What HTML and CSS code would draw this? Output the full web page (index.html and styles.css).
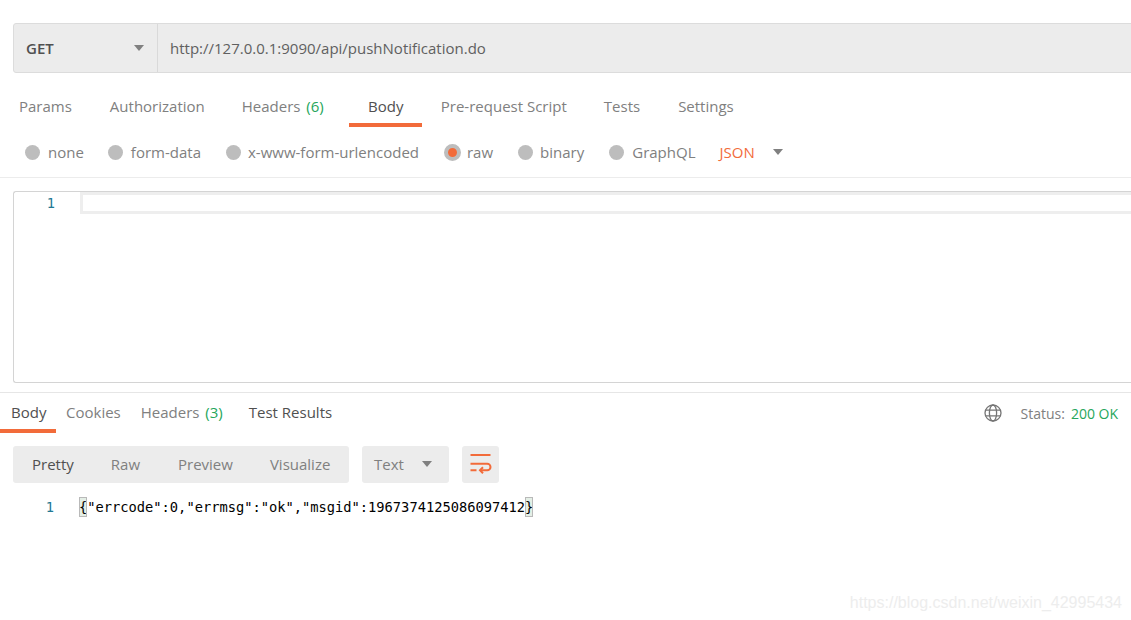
FILE: index.html
```html
<!DOCTYPE html>
<html lang="en">
<head>
<meta charset="utf-8">
<title>Postman</title>
<link rel="stylesheet" href="styles.css">
</head>
<body>
<div class="app">
  <div class="urlbar">
    <div class="method"><span class="method-name">GET</span><span class="caret"></span></div>
    <div class="url">http://127.0.0.1:9090/api/pushNotification.do</div>
  </div>
  <nav class="req-tabs">
    <span class="tab t-params">Params</span>
    <span class="tab t-auth">Authorization</span>
    <span class="tab t-headers">Headers <em class="count">(6)</em></span>
    <span class="tab t-body active">Body</span>
    <span class="tab t-pre">Pre-request Script</span>
    <span class="tab t-tests">Tests</span>
    <span class="tab t-settings">Settings</span>
  </nav>
  <div class="body-types">
    <span class="radio r-none"><i class="dot"></i>none</span>
    <span class="radio r-form"><i class="dot"></i>form-data</span>
    <span class="radio r-url"><i class="dot"></i>x-www-form-urlencoded</span>
    <span class="radio r-raw"><i class="dot on"></i>raw</span>
    <span class="radio r-bin"><i class="dot"></i>binary</span>
    <span class="radio r-gql"><i class="dot"></i>GraphQL</span>
    <span class="json">JSON</span><span class="caret"></span>
  </div>
  <div class="editor">
    <div class="gutter">1</div>
    <div class="code-area"><div class="active-line"></div></div>
  </div>
  <nav class="res-tabs">
    <span class="rtab active">Body</span>
    <span class="rtab r-cookies">Cookies</span>
    <span class="rtab r-headers">Headers <em class="count">(3)</em></span>
    <span class="rtab r-tests">Test Results</span>
    <span class="status">
      <svg class="globe" width="18" height="18" viewBox="0 0 18 18" fill="none" stroke="#757575" stroke-width="1.3"><circle cx="9" cy="9" r="8"/><ellipse cx="9" cy="9" rx="3.600" ry="8"/><path d="M1.600 6.200h14.800M1.600 11.800h14.800"/></svg>
      <span class="status-label">Status:</span><span class="status-val">200 OK</span>
    </span>
  </nav>
  <div class="toolbar">
    <div class="seg">
      <span class="seg-item s-pretty">Pretty</span>
      <span class="seg-item s-raw">Raw</span>
      <span class="seg-item s-preview">Preview</span>
      <span class="seg-item s-vis">Visualize</span>
    </div>
    <div class="format"><span>Text</span><span class="caret"></span></div>
    <div class="wrap">
      <svg class="wrap-icon" width="22" height="20" viewBox="0 0 22 20" fill="none" stroke="#f26b3a" stroke-width="2"><path d="M0.500 1h20M0.500 9.700h16.700a3.300 3.300 0 0 1 0 6.600H10.500M0.500 16.300h6"/><path d="M13 13.300l-3 3 3 3"/></svg>
    </div>
  </div>
  <div class="response">
    <div class="res-gutter">1</div>
    <div class="res-code"><span class="bracket">{</span>"errcode":0,"errmsg":"ok","msgid":1967374125086097412<span class="bracket">}</span></div>
  </div>
  <div class="watermark">https://blog.csdn.net/weixin_42995434</div>
</div>
</body>
</html>
```
FILE: styles.css
```css
* { box-sizing: border-box; }
html, body { margin: 0; height: 100%; }
body { background: #fff; overflow: hidden; font-family: "Open Sans", "Noto Sans", sans-serif; font-size: 15px; color: #808080; }
.app { position: relative; width: 1131px; height: 620px; overflow: hidden; padding-top: 23px; }
em { font-style: normal; }

.urlbar { display: flex; height: 50px; margin-left: 13px; width: 1140px; background: #ececec; border: 1px solid #dcdcdc; border-radius: 3px; }
.method { width: 144px; display: flex; align-items: center; justify-content: space-between; padding: 0 13px 0 12px; border-right: 1px solid #d9d9d9; }
.method-name { font-weight: 600; color: #505050; }
.url { padding-left: 12px; line-height: 48px; color: #606060; }
.caret { display: inline-block; width: 0; height: 0; border-left: 5.500px solid transparent; border-right: 5.500px solid transparent; border-top: 6px solid #808080; }

.req-tabs { display: flex; height: 54px; }
.tab { display: block; height: 54px; padding-top: 21px; line-height: 24px; color: #808080; white-space: nowrap; }
.t-params { margin-left: 19px; }
.t-auth { margin-left: 38px; }
.t-headers { margin-left: 37px; }
.count { color: #26a65b; margin-left: 2px; }
.t-body { margin-left: 25px; width: 73px; padding-left: 1px; text-align: center; color: #505050; border-bottom: 4px solid #f26b3a; }
.t-pre { margin-left: 19px; }
.t-tests { margin-left: 37px; }
.t-settings { margin-left: 38px; }

.body-types { display: flex; align-items: center; height: 51px; border-bottom: 1px solid #ececec; color: #808080; }
.radio { display: flex; align-items: center; white-space: nowrap; }
.dot { display: block; width: 15px; height: 15px; border-radius: 50%; background: #bdbdbd; margin-right: 8px; flex: none; }
.dot.on { width: 17px; height: 17px; margin-right: 6px; background: #f26b3a; border: 4px solid #bdbdbd; }
.r-url .dot, .r-bin .dot { margin-right: 7px; }
.r-none { margin-left: 25px; }
.r-form { margin-left: 24px; }
.r-url { margin-left: 25px; }
.r-raw { margin-left: 25px; }
.r-bin { margin-left: 25px; }
.r-gql { margin-left: 25px; }
.json { margin-left: 24px; color: #f26b3a; margin-right: 18px; }

.editor { display: flex; height: 192px; margin: 13px 0 0 13px; width: 1130px; border: 1px solid #d4d4d4; border-right: 0; border-radius: 3px 0 0 3px; }
.gutter { width: 66px; padding: 2px 25px 0 0; text-align: right; font-family: "DejaVu Sans Mono", monospace; font-size: 13.700px; line-height: 18px; color: #237893; }
.code-area { flex: 1; }
.active-line { height: 22px; border: 3px solid #eeeeee; border-right: 0; }

.res-tabs { display: flex; align-items: flex-start; height: 41px; margin-top: 9px; border-top: 1px solid #e6e6e6; }
.rtab { display: block; height: 40px; line-height: 38px; color: #808080; white-space: nowrap; }
.rtab.active { width: 56px; padding-left: 11px; color: #505050; border-bottom: 4px solid #f26b3a; }
.r-cookies { margin-left: 10px; }
.r-headers { margin-left: 20px; }
.r-tests { margin-left: 26px; color: #505050; }
.status { margin-left: auto; display: flex; align-items: center; height: 40px; padding-right: 13px; font-size: 14px; }
.globe { margin-right: 19px; }
.status-label { margin-right: 6px; }
.status-val { color: #26a65b; }

.toolbar { display: flex; height: 37px; margin: 13px 0 0 13px; }
.seg { display: flex; align-items: center; width: 336px; padding-bottom: 1px; background: #ececec; border-radius: 3px; }
.seg-item { white-space: nowrap; }
.s-pretty { margin-left: 19px; color: #505050; }
.s-raw { margin-left: 37px; }
.s-preview { margin-left: 38px; }
.s-vis { margin-left: 37px; }
.format { display: flex; align-items: center; justify-content: space-between; width: 87px; margin-left: 13px; padding: 0 17px 1px 12px; background: #ececec; border-radius: 3px; }
.wrap { display: flex; align-items: center; justify-content: center; width: 37px; margin-left: 13px; padding-bottom: 1px; background: #ececec; border-radius: 3px; }

.response { display: flex; margin-top: 14px; font-family: "DejaVu Sans Mono", monospace; font-size: 13.720px; line-height: 20px; }
.res-gutter { width: 55px; text-align: right; color: #237893; padding-right: 1px; }
.res-code { margin-left: 24px; color: #000; white-space: nowrap; }
.bracket { display: inline-block; background: #e4efe6; outline: 1px solid #b9b9b9; outline-offset: -1px; }

.watermark { position: absolute; right: 9px; top: 594px; font-family: "Liberation Sans", Arial, sans-serif; font-size: 16px; color: #ededed; white-space: nowrap; }
```
